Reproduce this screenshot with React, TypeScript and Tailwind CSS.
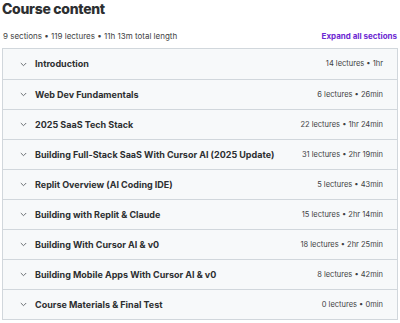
import React from "react";

const sections = [
  { title: "Introduction", meta: "14 lectures • 1hr" },
  { title: "Web Dev Fundamentals", meta: "6 lectures • 26min" },
  { title: "2025 SaaS Tech Stack", meta: "22 lectures • 1hr 24min" },
  { title: "Building Full-Stack SaaS With Cursor AI (2025 Update)", meta: "31 lectures • 2hr 19min" },
  { title: "Replit Overview (AI Coding IDE)", meta: "5 lectures • 43min" },
  { title: "Building with Replit & Claude", meta: "15 lectures • 2hr 14min" },
  { title: "Building With Cursor AI & v0", meta: "18 lectures • 2hr 25min" },
  { title: "Building Mobile Apps With Cursor AI & v0", meta: "8 lectures • 42min" },
  { title: "Course Materials & Final Test", meta: "0 lectures • 0min" },
];

function Chevron() {
  return (
    <svg width="7" height="5" viewBox="0 0 7 5" fill="none" className="shrink-0">
      <path d="M0.8 1 L3.5 3.7 L6.2 1" stroke="#6a6f73" strokeWidth="1" />
    </svg>
  );
}

export default function App() {
  return (
    <div className="w-[400px] h-[323px] bg-white overflow-hidden" style={{ fontFamily: "Inter, 'Noto Sans', sans-serif" }}>
      <div className="px-[2px]">
        <h2 className="text-[14px] leading-[18px] font-extrabold tracking-[-0.3px] text-[#2d2f31] pt-[0px]">Course content</h2>
        <div className="flex items-end justify-between mt-[13px] mb-[7px] pl-[1px]">
          <span className="text-[8px] leading-[10px] text-[#3e4143]">9 sections • 119 lectures • 11h 13m total length</span>
          <span className="text-[8px] leading-[10px] font-bold text-[#6d28d2] pr-[1px]">Expand all sections</span>
        </div>
        <div className="border border-[#d1d7dc]">
          {sections.map((s, i) => (
            <div
              key={i}
              className={`h-[30px] bg-[#f7f9fa] flex items-center justify-between pl-[17px] pr-[14px] ${i > 0 ? "border-t border-[#d1d7dc]" : ""}`}
            >
              <div className="flex items-center gap-[8px]">
                <Chevron />
                <span className="text-[9px] font-bold text-[#2d2f31]">{s.title}</span>
              </div>
              <span className="text-[7.5px] text-[#3e4143]">{s.meta}</span>
            </div>
          ))}
        </div>
      </div>
    </div>
  );
}
